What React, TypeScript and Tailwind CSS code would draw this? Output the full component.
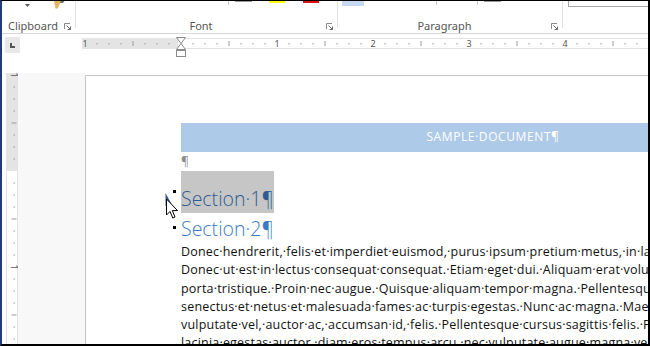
import React from 'react';

const DOT = '\u00B7';

// Small ribbon dialog launcher glyph
function Launcher() {
  return (
    <svg width="7" height="7" viewBox="0 0 7 7" className="block">
      <path d="M0.5 6V0.5H6" fill="none" stroke="#8a8a8a" strokeWidth="1" />
      <path d="M2.5 2.5L6.5 6.5M6.5 3.5V6.5H3.5" fill="none" stroke="#6b6b6b" strokeWidth="1" />
    </svg>
  );
}

function GroupLabel({ label }: { label: string }) {
  return (
    <div className="mt-auto flex h-[14px] items-center">
      <div className="flex-1 text-center text-[11px] leading-[14px] text-[#555]">{label}</div>
      <div className="w-[11px]">
        <Launcher />
      </div>
    </div>
  );
}

function Ribbon() {
  return (
    <div className="flex h-[33px] box-border border-b border-[#d6d6d6] bg-white" style={{ fontFamily: '"Noto Sans", sans-serif' }}>
      {/* Clipboard */}
      <div className="flex w-[73px] flex-col">
        <div className="flex items-start">
          <svg width="5" height="3" viewBox="0 0 5 3" className="ml-[23px] mt-[3px]">
            <path d="M0 0H5L2.5 3Z" fill="#5a5a5a" />
          </svg>
          <svg width="14" height="8" viewBox="0 0 14 8" className="ml-[22px]">
            <path d="M2 0H9L5.5 7.5H3.5Z" fill="#e8b45a" />
            <path d="M8.5 0H12.5L11 2H8Z" fill="#6d6d6d" />
          </svg>
        </div>
        <GroupLabel label="Clipboard" />
      </div>
      <div className="h-[27px] w-px bg-[#e1e1e1]" />
      {/* Font */}
      <div className="flex w-[261px] flex-col">
        <div className="flex items-start">
          <div className="ml-[152px] h-[4px] w-px bg-[#c8c8c8]" />
          <div className="ml-[6px] h-px w-[17px] bg-[#9a9a9a]" />
          <div className="ml-[17px] h-[2px] w-[16px] bg-[#ffff00]" />
          <div className="ml-[18px] h-[2px] w-[16px] bg-[#e01010]" />
        </div>
        <GroupLabel label="Font" />
      </div>
      <div className="h-[27px] w-px bg-[#e1e1e1]" />
      {/* Paragraph */}
      <div className="flex w-[224px] flex-col">
        <div className="flex items-start">
          <div className="ml-[4px] h-[5px] w-[22px] bg-[#c5d9f1]" />
          <div className="ml-[72px] h-[4px] w-px bg-[#c8c8c8]" />
          <div className="ml-[40px] h-[4px] w-px bg-[#c8c8c8]" />
          <div className="ml-[6px] h-px w-[17px] bg-[#9a9a9a]" />
        </div>
        <GroupLabel label="Paragraph" />
      </div>
      <div className="h-[27px] w-px bg-[#e1e1e1]" />
      {/* Styles */}
      <div className="flex-1">
        <div className="ml-[5px] h-[6px] border-b border-l border-[#a8a8a8]" />
      </div>
    </div>
  );
}

function HorizontalRuler() {
  const zero = 99;
  const marks: React.ReactNode[] = [];
  for (let k = -8; k <= 46; k++) {
    const x = zero + 12 * k;
    if (k === 0) continue;
    if (k % 8 === 0) {
      marks.push(
        <text key={k} x={x} y={13} textAnchor="middle" fontSize="9" fill="#555" fontFamily="Noto Sans, sans-serif">
          {Math.abs(k / 8)}
        </text>
      );
    } else if (k % 4 === 0) {
      marks.push(<rect key={k} x={x - 0.5} y={7} width={1} height={5} fill="#9a9a9a" />);
    } else {
      marks.push(<rect key={k} x={x - 0.5} y={9} width={1} height={1.5} fill="#9a9a9a" />);
    }
  }
  return (
    <svg width="570" height="26" className="ml-[64px] block">
      <rect x="0" y="4" width="570" height="11" fill="#ffffff" />
      <rect x="0" y="4" width="96" height="11" fill="#e4e4e4" />
      <line x1="96" y1="4.5" x2="570" y2="4.5" stroke="#e2e2e2" />
      <line x1="96" y1="14.5" x2="570" y2="14.5" stroke="#e2e2e2" />
      {marks}
      <path d="M94.5 3.5H103.5L99 9.5L103.5 15.5H94.5L99 9.5Z" fill="#fff" stroke="#8a8a8a" />
      <rect x="94.5" y="16.5" width="9" height="6" fill="#fff" stroke="#8a8a8a" />
    </svg>
  );
}

function VerticalRuler() {
  const zero = 98;
  const marks: React.ReactNode[] = [];
  for (let k = -8; k <= 15; k++) {
    const y = zero + 12 * k;
    if (k === 0) continue;
    if (k % 8 === 0) {
      marks.push(
        <text
          key={k}
          x={8}
          y={y}
          textAnchor="middle"
          fontSize="9"
          fill="#555"
          fontFamily="Noto Sans, sans-serif"
          transform={`rotate(90 8 ${y}) translate(0 3)`}
        >
          {Math.abs(k / 8)}
        </text>
      );
    } else if (k % 4 === 0) {
      marks.push(<rect key={k} x={5.5} y={y - 0.5} width={5} height={1} fill="#9a9a9a" />);
    } else {
      marks.push(<rect key={k} x={7.5} y={y - 0.5} width={1.5} height={1} fill="#9a9a9a" />);
    }
  }
  return (
    <svg width="12" height="280" className="ml-[4px] mt-[13px] block overflow-visible">
      <rect x="0" y="0" width="12" height="280" fill="#ffffff" />
      <rect x="0" y="0" width="12" height="98" fill="#e4e4e4" />
      <line x1="0.5" y1="98" x2="0.5" y2="280" stroke="#e2e2e2" />
      <line x1="11.5" y1="98" x2="11.5" y2="280" stroke="#e2e2e2" />
      {marks}
    </svg>
  );
}

const bodyLines = [
  'Donec hendrerit, felis et imperdiet euismod, purus ipsum pretium metus, in lacinia nulla nisl eget sapien.',
  'Donec ut est in lectus consequat consequat. Etiam eget dui. Aliquam erat volutpat. Sed at lorem in nunc',
  'porta tristique. Proin nec augue. Quisque aliquam tempor magna. Pellentesque habitant morbi tristique',
  'senectus et netus et malesuada fames ac turpis egestas. Nunc ac magna. Maecenas odio dolor, vulputate',
  'vulputate vel, auctor ac, accumsan id, felis. Pellentesque cursus sagittis felis. Pellentesque porttitor,',
  'lacinia egestas auctor, diam eros tempus arcu, nec vulputate augue magna vel risus. Cras non magna vel',
];

function Page() {
  return (
    <div className="mt-[15px] flex-1 border-l border-t border-[#c6c6c6] bg-white pl-[95px] pt-[47px]" style={{ fontFamily: '"Open Sans", sans-serif' }}>
      <div className="w-[624px]">
        <div className="h-[29px] bg-[#adcae8] text-center text-[12px] leading-[28px] tracking-[0.6px] text-white">
          {`SAMPLE${DOT}DOCUMENT\u00B6`}
        </div>
        <div className="h-[19px] text-[12px] leading-[19px] text-[#8c8c8c]">{'\u00B6'}</div>

        {/* Heading 1, selected */}
        <div className="relative h-[42px]">
          <span className="inline-block bg-[#c6c6c6] pt-[14px] text-[19.5px] font-light leading-[28px] text-[#2d5d90]">
            {`Section${DOT}1\u00B6`}
          </span>
          <div className="absolute left-[-8px] top-[19px] h-[3px] w-[3px] bg-black" />
          <svg width="16" height="26" viewBox="0 0 16 26" className="absolute left-[-16px] top-[22px]">
            <path d="M0.5 0V13L6.5 11Z" fill="#2b5797" />
            <path d="M1.5 6V22L5 18.5L7.8 25L10 24L7.3 17.6H12.5Z" fill="#fff" stroke="#000" strokeWidth="1" strokeLinejoin="round" />
          </svg>
        </div>

        {/* Heading 2 */}
        <div className="relative pt-[2px] text-[19.5px] font-light leading-[28px] text-[#3b7cc0]">
          {`Section${DOT}2\u00B6`}
          <div className="absolute left-[-8px] top-[13px] h-[3px] w-[3px] bg-black" />
        </div>

        <div className="text-[12.5px] leading-[18.3px] tracking-[0.2px] text-[#111]">
          {bodyLines.map((l, i) => (
            <div key={i} className="whitespace-nowrap">
              {l.split(' ').join(DOT)}
            </div>
          ))}
        </div>
      </div>
    </div>
  );
}

export default function App() {
  return (
    <div className="box-border h-[346px] w-[650px] overflow-hidden border-b-2 border-l-2 border-r-2 border-t border-b-black border-l-[#1f3d78] border-r-black border-t-black bg-white">
      <Ribbon />
      <div className="grid h-[311px] grid-cols-[16px_1fr] grid-rows-[26px_1fr]">
        <div className="relative">
          <div className="ml-[3px] mt-[3px] flex h-[16px] w-[15px] items-center justify-center bg-[#e8e8e8]">
            <div className="mt-[1px] h-[5px] w-[5px] border-b-2 border-l-2 border-[#555]" />
          </div>
        </div>
        <div className="overflow-hidden">
          <HorizontalRuler />
        </div>
        <div className="bg-white">
          <VerticalRuler />
        </div>
        <div className="flex overflow-hidden bg-white">
          <div className="mt-[13px] w-[67px] shrink-0 bg-[#f8f8f8]" />
          <Page />
        </div>
      </div>
    </div>
  );
}
